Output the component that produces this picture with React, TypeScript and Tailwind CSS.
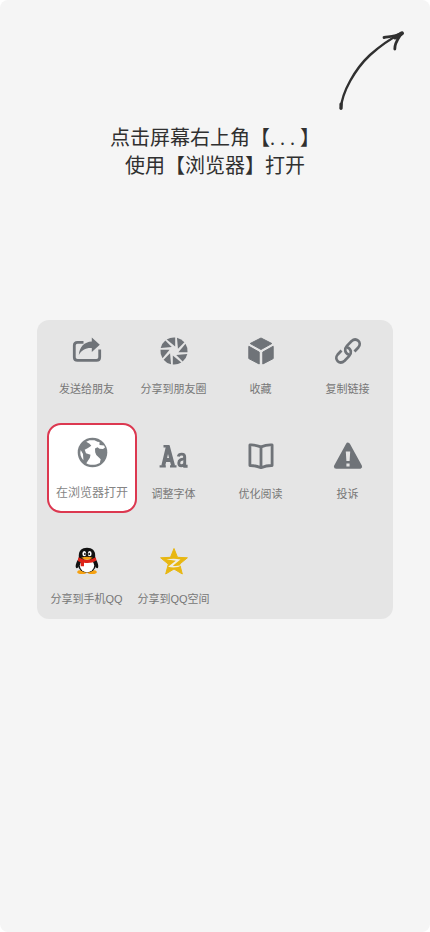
import type { ReactNode } from "react";

function ShareIcon() {
  return (
    <svg viewBox="0 0 32 32" className="size-8" fill="none" aria-hidden="true">
      <path d="M12.5 7.300H6.5Q3.3 7.300 3.3 10.500V22.200Q3.300 25.300 6.500 25.300H25.500Q28.700 25.300 28.700 22.200V14.500" stroke="#6f7378" strokeWidth="2.800" />
      <path d="M20.800 2.600 28.800 9.800 20.800 17V13C14.500 12.700 10.900 14.800 7.800 19.900C8.600 12 13.200 7 20.800 6.600Z" fill="#6f7378" />
    </svg>
  );
}

function ApertureIcon() {
  return (
    <svg viewBox="0 0 32 32" className="size-8" aria-hidden="true">
      <defs>
        <path id="blade" d="M17.200 2.500A13.600 13.600 0 0 0 8.700 4.500L17.200 11.600Z" fill="#6f7378" />
      </defs>
      {[0, 45, 90, 135, 180, 225, 270, 315].map((angle) => (
        <use key={angle} href="#blade" transform={`rotate(${angle} 16 16)`} />
      ))}
    </svg>
  );
}

function BoxIcon() {
  return (
    <svg viewBox="0 0 32 32" className="size-8" fill="#6f7378" stroke="#6f7378" strokeWidth="1" strokeLinejoin="round" aria-hidden="true">
      <path d="M16 3 26.800 8.500 16 14.500 5.200 8.500Z" />
      <path d="M3.800 11.300 14.200 17.100V29L3.800 23.600Z" />
      <path d="M28.200 11.300 17.800 17.100V29L28.200 23.600Z" />
    </svg>
  );
}

function LinkIcon() {
  return (
    <svg viewBox="0 0 32 32" className="size-8" fill="none" stroke="#6f7378" strokeWidth="2.700" aria-hidden="true">
      <path d="M17 19.800C12.500 18.300 12.200 13.700 14.900 10.900L19.400 6.300C24.300 1.800 30.500 7.500 26.300 12.500L22.500 16.500" />
      <path d="M15 12.200C19.600 13.900 19.900 18.200 17.100 21.100L12.600 25.700C7.700 30.200 1.500 24.500 5.700 19.500L9.500 15.500" />
    </svg>
  );
}

function GlobeIcon() {
  return (
    <svg viewBox="0 0 32 32" className="size-8" aria-hidden="true">
      <circle cx="16.500" cy="16.500" r="14.800" fill="#7b8084" />
      <path d="M10.200 5.800 13.500 4.300H18.500L21.500 5.800 23.500 6V9L28 9.500 29 11.500 27 13 23.500 12.800 21.500 11.200 19 12.500 19.200 16.200 20.300 19.100 24.700 23.300 23.800 26.900C19 29.500 13.700 29.300 10.300 27.200L13.900 21.800 14.500 18.700 10 17.300 8.700 13.800 12 11.900 15.300 9.700 13.600 7.700Z" fill="white" />
      <path d="M4.700 14 7 18 7.400 24.200C4.500 21.200 3.700 17.700 4.700 14Z" fill="white" />
    </svg>
  );
}

function FontIcon() {
  return (
    <svg viewBox="0 0 32 32" className="size-8" fill="none" stroke="#6f7378" aria-hidden="true">
      <path d="M5.200 26 9.900 6.300 15.200 26M7 20H13.300" strokeWidth="3.800" />
      <path d="M5.500 6.300H11.500M1.600 26.400H7.800M12 26.400H18.500" strokeWidth="2.400" />
      <path d="M20.300 16.500C21 13.500 26.700 13 26.700 17V26.200H29.600M26.700 19.300C23.500 18.600 20.800 20 20.800 22.900C20.800 26.900 25.400 26.200 26.700 23.600" strokeWidth="2.900" />
    </svg>
  );
}

function BookIcon() {
  return (
    <svg viewBox="0 0 32 32" className="size-8" fill="none" stroke="#6f7378" strokeWidth="2.800" strokeLinejoin="round" aria-hidden="true">
      <path d="M16 6.900Q10 4.500 4.900 5V25.500Q10 25.300 16 27.700Q22 25.300 27.100 25.500V5Q22 4.500 16 6.900V27" />
    </svg>
  );
}

function WarningIcon() {
  return (
    <svg viewBox="0 0 32 32" className="size-8" aria-hidden="true">
      <path d="M16 5 27.800 26.500H4.200Z" fill="#6f7378" stroke="#6f7378" strokeWidth="4.600" strokeLinejoin="round" />
      <path d="M13.800 11.400H18.200L17.600 21H14.400ZM14.400 23.600H17.600V26.600H14.400Z" fill="#e5e5e5" />
    </svg>
  );
}

function PenguinIcon() {
  return (
    <svg viewBox="0 0 32 32" className="size-8" aria-hidden="true">
      <ellipse cx="11" cy="27" rx="4.800" ry="2" fill="#f5a111" />
      <ellipse cx="21" cy="27" rx="4.800" ry="2" fill="#f5a111" />
      <path d="M8 13C5.800 16 4 20.500 5 22.800C6 24.300 7.800 21.300 9 19.700M24 13C26.200 16 28 20.500 27 22.800C26 24.300 24.200 21.300 23 19.700" fill="#111" />
      <ellipse cx="16" cy="19.500" rx="9" ry="8" fill="#111" />
      <path d="M7.800 12V10.500C7.800 5.500 10.700 2.700 16 2.700S24.200 5.500 24.200 10.500V14L16 17 7.800 14Z" fill="#111" />
      <ellipse cx="16" cy="20.600" rx="7.200" ry="6.600" fill="white" />
      <path d="M7.500 12.300Q16 17.300 24.700 12.300L25.500 15.500Q20 19 13 17.800V21.300H9.700V17.200L6.800 15.900Z" fill="#dd2318" />
      <ellipse cx="13.300" cy="8.700" rx="1.900" ry="2.600" fill="white" />
      <ellipse cx="18.700" cy="8.700" rx="1.900" ry="2.600" fill="white" />
      <ellipse cx="13.900" cy="8.900" rx=".8" ry="1.200" fill="#111" />
      <ellipse cx="18.200" cy="8.900" rx=".8" ry="1.200" fill="#111" />
      <path d="M10.300 12.700Q16 10.700 21.700 12.700Q16 17 10.300 12.700Z" fill="#f5a111" />
    </svg>
  );
}

function QzoneIcon() {
  return (
    <svg viewBox="0 0 32 32" className="size-8" aria-hidden="true">
      <path d="M16 3.500 19.500 12.300 29.400 12.800 21.700 19.100 24.300 29 16 24 7.700 29 10.300 19.100 2.600 12.800 12.500 12.300Z" fill="#e8b711" stroke="#e8b711" strokeWidth="1" strokeLinejoin="round" />
      <path d="M8.200 14.700Q15 13 22.500 14.500L14.800 20.700Q20.500 21.400 25.400 19.400Q18.500 23.900 10.100 21.700L17.800 15.800Q12.500 14.700 8.200 14.700Z" fill="#f1eee2" />
    </svg>
  );
}

const items: { label: string; icon: ReactNode; highlighted?: boolean }[] = [
  { label: "发送给朋友", icon: <ShareIcon /> },
  { label: "分享到朋友圈", icon: <ApertureIcon /> },
  { label: "收藏", icon: <BoxIcon /> },
  { label: "复制链接", icon: <LinkIcon /> },
  { label: "在浏览器打开", icon: <GlobeIcon />, highlighted: true },
  { label: "调整字体", icon: <FontIcon /> },
  { label: "优化阅读", icon: <BookIcon /> },
  { label: "投诉", icon: <WarningIcon /> },
  { label: "分享到手机QQ", icon: <PenguinIcon /> },
  { label: "分享到QQ空间", icon: <QzoneIcon /> },
];

export default function App() {
  return (
    <main className="min-h-screen rounded-lg bg-[#f5f5f5] font-['Liberation_Sans','Noto_Sans_CJK_SC',sans-serif]">
      <header>
        <div className="flex justify-end pt-6 pr-5">
          <svg viewBox="0 0 80 92" className="h-[92px] w-20" fill="none" stroke="#303030" strokeLinecap="round" strokeLinejoin="round" aria-hidden="true">
            <path d="M11 84C12 68 25 45 40 31C49 23 58 16 70 10" strokeWidth="2.400" />
            <path d="M54 13.500C60 12.500 65 12.500 71.500 9.500C68 15 64.500 19 64.800 25" strokeWidth="2.800" />
            <path d="M11 80 11 84.300" strokeWidth="3.200" />
            <path d="M65 13.500 72 9.300" strokeWidth="4" />
          </svg>
        </div>
        <h1 className="pt-2 text-center font-['Liberation_Serif','Noto_Sans_CJK_SC',sans-serif] text-xl leading-7 font-normal whitespace-pre text-[#303030]">
          点击屏幕右上角【. . . 】
          <br />
          使用【浏览器】打开
        </h1>
      </header>
      <section className="mx-[37px] mt-[140px] grid grid-cols-4 gap-y-[43px] rounded-xl bg-[#e5e5e5] pt-[15px] pr-0.5 pb-3 pl-1.5">
        {items.map((item) => (
          <button
            key={item.label}
            type="button"
            className={
              item.highlighted
                ? "-mt-[17px] -mb-3 ml-1 flex h-[90px] w-[90px] flex-col items-center gap-[17px] rounded-[14px] border-2 border-[#dc3850] bg-white pt-[11px] text-xs leading-4 whitespace-nowrap text-[#858585]"
                : "flex flex-col items-center gap-[14px] text-[11px] leading-4 whitespace-nowrap text-[#777777]"
            }
          >
            {item.icon}
            <span>{item.label}</span>
          </button>
        ))}
      </section>
    </main>
  );
}
